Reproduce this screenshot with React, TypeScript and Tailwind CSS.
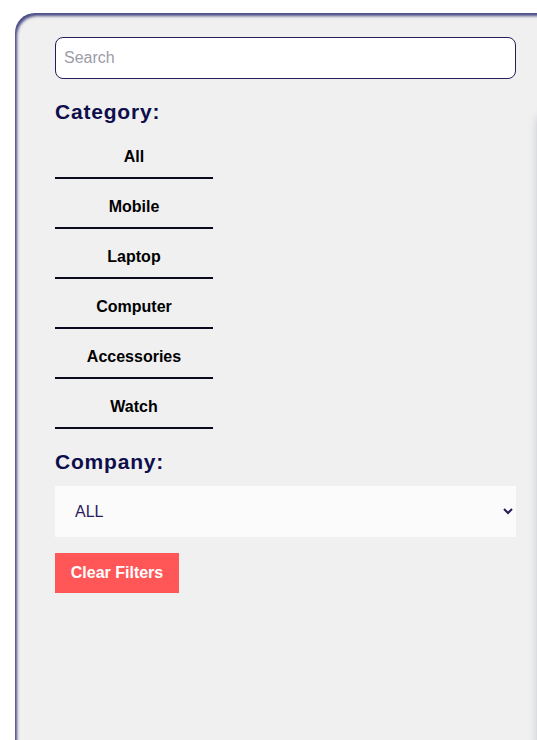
import React, { useState } from "react";

const categories = ["All", "Mobile", "Laptop", "Computer", "Accessories", "Watch"];
const companies = ["ALL", "Apple", "Samsung", "Dell", "Nokia", "Asus", "Lenovo", "Rolex"];

export default function App() {
  const [search, setSearch] = useState("");
  const [category, setCategory] = useState("All");
  const [company, setCompany] = useState("ALL");

  const clearFilters = () => {
    setSearch("");
    setCategory("All");
    setCompany("ALL");
  };

  return (
    <div
      className="w-full min-h-screen overflow-hidden bg-white pt-[13px] pl-[15px]"
      style={{ fontFamily: '"Liberation Sans", Arial, sans-serif' }}
    >
      <div className="flex w-[760px] min-h-[727px] rounded-tl-[20px] bg-[#f0f0f0] shadow-[inset_2px_3px_3px_rgba(45,45,115,0.85)]">
        {/* Filter sidebar */}
        <div className="w-[501px] shrink-0 pl-[40px] pt-[24px]">
          <input
            type="text"
            value={search}
            onChange={(e) => setSearch(e.target.value)}
            placeholder="Search"
            className="block h-[42px] w-[461px] rounded-[8px] border border-[#2b1a5c] bg-white px-[8px] text-[16px] text-[#2b1a5c] outline-none placeholder:text-[#9c9ca8]"
          />

          <h3 className="mt-[20px] text-[21px] leading-[25px] font-bold tracking-[0.8px] text-[#0e0e4c]">
            Category:
          </h3>
          <div className="mt-[5px] flex w-[158px] flex-col">
            {categories.map((c) => (
              <button
                key={c}
                onClick={() => setCategory(c)}
                className="border-b-2 border-[#0a0a1f] pt-[16px] pb-[8px] text-center text-[16px] leading-[24px] font-bold text-black"
              >
                {c}
              </button>
            ))}
          </div>

          <h3 className="mt-[20px] text-[21px] leading-[25px] font-bold tracking-[0.8px] text-[#0e0e4c]">
            Company:
          </h3>
          <select
            value={company}
            onChange={(e) => setCompany(e.target.value)}
            className="mt-[12px] block h-[51px] w-[461px] border-0 bg-[#fbfbfb] pl-[16px] pr-[4px] text-[16px] text-[#2b1a5c] outline-none"
          >
            {companies.map((c) => (
              <option key={c} value={c}>
                {c}
              </option>
            ))}
          </select>

          <button
            onClick={clearFilters}
            className="mt-[16px] h-[40px] w-[124px] bg-[#ff5757] text-[16px] font-bold text-white"
          >
            Clear Filters
          </button>
        </div>

        {/* Products area (mostly off screen) */}
        <div className="flex-1 pl-[24px] pt-[105px]">
          <div className="h-[640px] w-[200px] bg-[#f0f0f0] shadow-[0_0_10px_rgba(70,70,130,0.45)]" />
        </div>
      </div>
    </div>
  );
}
